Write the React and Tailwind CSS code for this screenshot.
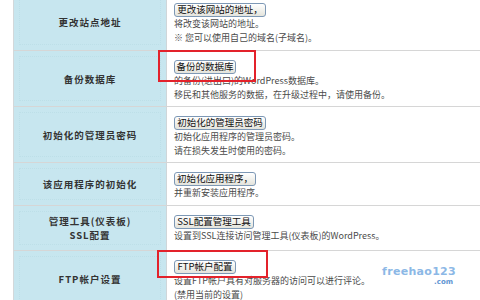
import React from "react";

const rows = [
  { h: "h-[57px]", label: ["更改站点地址"], btn: "更改该网站的地址，", bw: "w-[92px]", desc: ["将改变该网站的地址。", "※ 您可以使用自己的域名(子域名)。"] },
  { h: "h-[56px]", label: ["备份数据库"], btn: "备份的数据库", bw: "w-[62px]", desc: ["的备份(进出口)的WordPress数据库。", "移民和其他服务的数据，在升级过程中，请使用备份。"] },
  { h: "h-[56px]", label: ["初始化的管理员密码"], btn: "初始化的管理员密码", bw: "w-[92px]", desc: ["初始化应用程序的管理员密码。", "请在损失发生时使用的密码。"] },
  { h: "h-[43px]", label: ["该应用程序的初始化"], btn: "初始化应用程序，", bw: "w-[82px]", desc: ["并重新安装应用程序。"] },
  { h: "h-[45px]", label: ["管理工具(仪表板)", "SSL配置"], btn: "SSL配置管理工具", bw: "w-[80px]", desc: ["设置到SSL连接访问管理工具(仪表板)的WordPress。"] },
  { h: "h-[56px]", label: ["FTP帐户设置"], btn: "FTP帐户配置", bw: "w-[62px]", desc: ["设置FTP帐户具有对服务器的访问可以进行评论。", "(禁用当前的设置)"] },
];

export default function App() {
  return (
    <div className="relative w-[480px] h-[300px] overflow-hidden bg-white font-['Noto_Sans_CJK_SC','Noto_Sans',sans-serif]">
      <div className="ml-[13px] -mt-[6px] border-l border-[#d3d8da]">
        {rows.map((r, i) => (
          <div key={i} className={`flex ${r.h} border-b border-[#d6d6d6]`}>
            <div className="w-[153px] shrink-0 bg-[#c7e6ef] border-r border-[#cfd6d9] p-[5px]">
              <div className="h-full border border-dotted border-[#bddfe8] flex flex-col items-center justify-center">
                {r.label.map((l, j) => (
                  <div key={j} className="text-[9.5px] leading-[14px] font-bold tracking-[1px] text-[#333]">
                    {l}
                  </div>
                ))}
              </div>
            </div>
            <div className="flex-1 pl-[7px] pt-[9px]">
              <div className={`${r.bw} h-[14px] flex items-center justify-center border border-[#7d98b5] rounded-[3px] bg-gradient-to-b from-white to-[#e4e4dc] text-[9.5px] leading-none text-[#111] whitespace-nowrap`}>
                {r.btn}
              </div>
              {r.desc.map((d, j) => (
                <div key={j} className="text-[9px] leading-[14px] text-[#4a4a4a] whitespace-nowrap">
                  {d}
                </div>
              ))}
            </div>
          </div>
        ))}
      </div>
      <div className="absolute left-[158px] top-[50px] w-[98px] h-[32px] border-2 border-[#e3222b]" />
      <div className="absolute left-[157px] top-[250px] w-[111px] h-[28px] border-2 border-[#e3222b]" />
      <div className="absolute left-[390px] top-[266px] w-[66px] flex flex-col items-end font-['DejaVu_Sans',sans-serif]">
        <div className="text-[11px] leading-[12px] font-bold text-[#8cb8e6] tracking-[0.3px]">freehao123</div>
        <div className="text-[7px] leading-[8px] font-bold text-[#5f94d2] mr-[3px]">.com</div>
      </div>
    </div>
  );
}
